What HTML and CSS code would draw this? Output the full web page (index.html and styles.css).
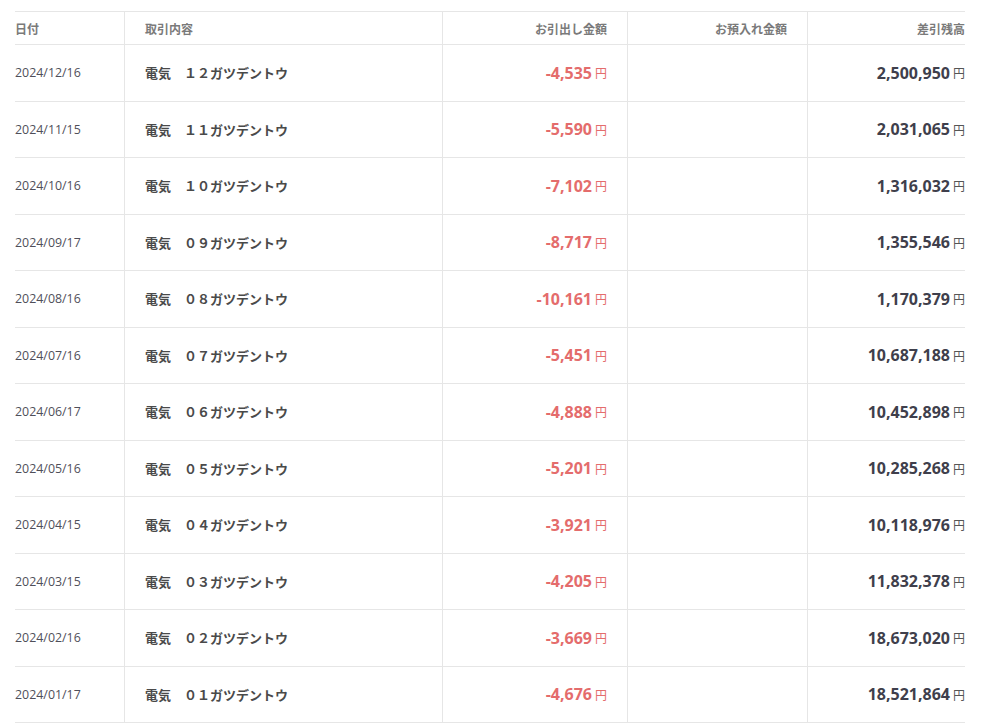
FILE: index.html
```html
<!DOCTYPE html>
<html lang="ja">
<head>
<meta charset="utf-8">
<link rel="stylesheet" href="styles.css">
</head>
<body>
<div class="ledger">
  <div class="row head">
    <div class="c date">日付</div>
    <div class="c desc">取引内容</div>
    <div class="c out">お引出し金額</div>
    <div class="c in">お預入れ金額</div>
    <div class="c bal">差引残高</div>
  </div>
  <div class="row"><div class="c date">2024/12/16</div><div class="c desc">電気　１２ガツデントウ</div><div class="c out"><span class="num">-4,535</span><span class="yen">円</span></div><div class="c in"></div><div class="c bal"><span class="num">2,500,950</span><span class="yen">円</span></div></div>
  <div class="row"><div class="c date">2024/11/15</div><div class="c desc">電気　１１ガツデントウ</div><div class="c out"><span class="num">-5,590</span><span class="yen">円</span></div><div class="c in"></div><div class="c bal"><span class="num">2,031,065</span><span class="yen">円</span></div></div>
  <div class="row"><div class="c date">2024/10/16</div><div class="c desc">電気　１０ガツデントウ</div><div class="c out"><span class="num">-7,102</span><span class="yen">円</span></div><div class="c in"></div><div class="c bal"><span class="num">1,316,032</span><span class="yen">円</span></div></div>
  <div class="row"><div class="c date">2024/09/17</div><div class="c desc">電気　０９ガツデントウ</div><div class="c out"><span class="num">-8,717</span><span class="yen">円</span></div><div class="c in"></div><div class="c bal"><span class="num">1,355,546</span><span class="yen">円</span></div></div>
  <div class="row"><div class="c date">2024/08/16</div><div class="c desc">電気　０８ガツデントウ</div><div class="c out"><span class="num">-10,161</span><span class="yen">円</span></div><div class="c in"></div><div class="c bal"><span class="num">1,170,379</span><span class="yen">円</span></div></div>
  <div class="row"><div class="c date">2024/07/16</div><div class="c desc">電気　０７ガツデントウ</div><div class="c out"><span class="num">-5,451</span><span class="yen">円</span></div><div class="c in"></div><div class="c bal"><span class="num">10,687,188</span><span class="yen">円</span></div></div>
  <div class="row"><div class="c date">2024/06/17</div><div class="c desc">電気　０６ガツデントウ</div><div class="c out"><span class="num">-4,888</span><span class="yen">円</span></div><div class="c in"></div><div class="c bal"><span class="num">10,452,898</span><span class="yen">円</span></div></div>
  <div class="row"><div class="c date">2024/05/16</div><div class="c desc">電気　０５ガツデントウ</div><div class="c out"><span class="num">-5,201</span><span class="yen">円</span></div><div class="c in"></div><div class="c bal"><span class="num">10,285,268</span><span class="yen">円</span></div></div>
  <div class="row"><div class="c date">2024/04/15</div><div class="c desc">電気　０４ガツデントウ</div><div class="c out"><span class="num">-3,921</span><span class="yen">円</span></div><div class="c in"></div><div class="c bal"><span class="num">10,118,976</span><span class="yen">円</span></div></div>
  <div class="row"><div class="c date">2024/03/15</div><div class="c desc">電気　０３ガツデントウ</div><div class="c out"><span class="num">-4,205</span><span class="yen">円</span></div><div class="c in"></div><div class="c bal"><span class="num">11,832,378</span><span class="yen">円</span></div></div>
  <div class="row"><div class="c date">2024/02/16</div><div class="c desc">電気　０２ガツデントウ</div><div class="c out"><span class="num">-3,669</span><span class="yen">円</span></div><div class="c in"></div><div class="c bal"><span class="num">18,673,020</span><span class="yen">円</span></div></div>
  <div class="row"><div class="c date">2024/01/17</div><div class="c desc">電気　０１ガツデントウ</div><div class="c out"><span class="num">-4,676</span><span class="yen">円</span></div><div class="c in"></div><div class="c bal"><span class="num">18,521,864</span><span class="yen">円</span></div></div>
</div>
</body>
</html>
```

FILE: styles.css
```css
html, body {
  margin: 0;
  padding: 0;
  background: #fff;
}
body {
  font-family: "Open Sans", "Noto Sans CJK JP", sans-serif;
  color: #444;
}
.ledger {
  margin: 11px 0 0 15px;
  width: 950px;
  border-top: 1px solid #e6e6e6;
}
.row {
  display: grid;
  grid-template-columns: 109px 318px 185px 180px 158px;
  height: 56.5px;
  box-sizing: border-box;
  border-bottom: 1px solid #e6e6e6;
}
.row.head {
  height: 33px;
}
.c {
  display: flex;
  align-items: center;
  box-sizing: border-box;
  white-space: nowrap;
}
.c + .c {
  border-left: 1px solid #e6e6e6;
}
.date {
  font-size: 12.4px;
  color: #4f4f5a;
}
.desc {
  padding-left: 20px;
  font-family: "Noto Sans CJK JP", sans-serif;
  font-weight: 700;
  font-size: 13px;
  color: #4a4a4a;
}
.out, .in {
  justify-content: flex-end;
  padding-right: 20px;
}
.bal {
  justify-content: flex-end;
}
.head .c {
  font-family: "Noto Sans CJK JP", sans-serif;
  font-size: 12px;
  font-weight: 700;
  color: #7a7a7a;
}
.num {
  font-size: 16px;
  font-weight: 700;
}
.yen {
  font-family: "Noto Sans CJK JP", sans-serif;
  font-size: 12px;
  margin-left: 3px;
}
.out .num, .out .yen {
  color: #e46c6c;
}
.bal .num {
  color: #3f3f4c;
}
.bal .yen {
  color: #555;
}
```
